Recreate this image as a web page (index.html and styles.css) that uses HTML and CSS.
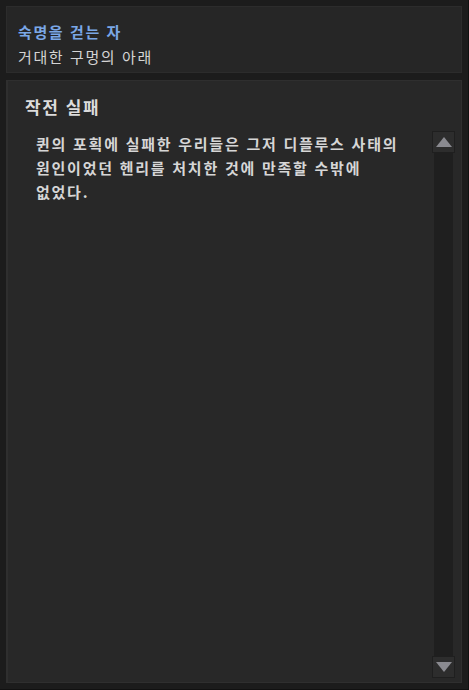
FILE: index.html
```html
<!DOCTYPE html>
<html lang="ko">
<head>
    <meta charset="UTF-8">
    <meta name="viewport" content="width=device-width, initial-scale=1.0">
    <title>작전 실패</title>
    <link rel="stylesheet" href="styles.css">
</head>
<body>
    <div class="frame">
        <div class="header">
            <p class="chapter">숙명을 걷는 자</p>
            <p class="place">거대한 구멍의 아래</p>
        </div>
        <div class="panel">
            <div class="content">
                <h2 class="title">작전 실패</h2>
                <p class="story">퀸의 포획에 실패한 우리들은 그저 디플루스 사태의<br>원인이었던 헨리를 처치한 것에 만족할 수밖에<br>없었다.</p>
            </div>
            <div class="scrollbar">
                <div class="scroll-btn up"></div>
                <div class="scroll-track"></div>
                <div class="scroll-btn down"></div>
            </div>
        </div>
    </div>
</body>
</html>
```
FILE: styles.css
```css
html, body {
    margin: 0;
    padding: 0;
    background: #1c1c1c;
}
body {
    font-family: "Noto Sans CJK KR", "Noto Sans", sans-serif;
    width: 469px;
    height: 690px;
    overflow: hidden;
}
.frame {
    box-sizing: border-box;
    height: 690px;
    padding: 6px 6px 6px 6px;
    display: flex;
    flex-direction: column;
    gap: 7px;
    border-right: 1px solid #111;
    border-bottom: 1px solid #111;
}
.header {
    background: #262626;
    border: 1px solid #2c2c2c;
    height: 67px;
    box-sizing: border-box;
    padding: 12px 11px 0;
}
.header p {
    margin: 0;
    font-size: 15px;
    line-height: 25px;
    letter-spacing: 1.6px;
}
.chapter {
    color: #7aa7e6;
    font-weight: bold;
}
.place {
    color: #d4d4d4;
}
.panel {
    flex: 1;
    background: #282828;
    border: 1px solid #2f2f2f;
    border-left-width: 2px;
    display: flex;
    padding: 13px 6px 4px 17px;
}
.content {
    flex: 1;
}
.title {
    margin: 0;
    color: #dcdcdc;
    font-size: 17px;
    font-weight: bold;
    line-height: 26px;
    letter-spacing: 1.6px;
}
.story {
    margin: 12px 0 0 11px;
    color: #d6d6d6;
    font-size: 15px;
    font-weight: bold;
    line-height: 24px;
    letter-spacing: 1.75px;
}
.scrollbar {
    width: 23px;
    margin-top: 37px;
    display: flex;
    flex-direction: column;
}
.scroll-btn {
    height: 22px;
    background: #2d2d2d;
    border: 1px solid #1f1f1f;
    box-sizing: border-box;
    display: flex;
    align-items: center;
    justify-content: center;
}
.scroll-btn::after {
    content: '';
    width: 0;
    height: 0;
    border-left: 8px solid transparent;
    border-right: 8px solid transparent;
}
.up::after {
    border-bottom: 10px solid #8a8a90;
}
.down::after {
    border-top: 10px solid #8a8a90;
}
.scroll-track {
    flex: 1;
    background: #1f1f1f;
    margin: 0 2px;
}
```
